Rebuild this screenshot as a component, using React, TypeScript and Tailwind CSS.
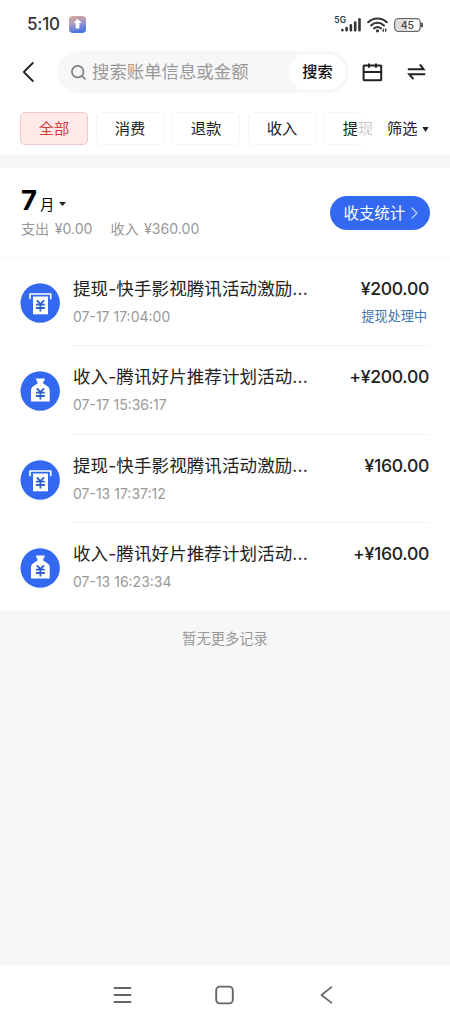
import { clsx } from 'clsx'

type RecordKind = 'withdraw' | 'income'

type BillRecord = {
  id: number
  kind: RecordKind
  title: string
  time: string
  amount: string
  status?: string
}

const tabs = ['全部', '消费', '退款', '收入']

const records: BillRecord[] = [
  { id: 1, kind: 'withdraw', title: '提现-快手影视腾讯活动激励...', time: '07-17 17:04:00', amount: '¥200.00', status: '提现处理中' },
  { id: 2, kind: 'income', title: '收入-腾讯好片推荐计划活动...', time: '07-17 15:36:17', amount: '+¥200.00' },
  { id: 3, kind: 'withdraw', title: '提现-快手影视腾讯活动激励...', time: '07-13 17:37:12', amount: '¥160.00' },
  { id: 4, kind: 'income', title: '收入-腾讯好片推荐计划活动...', time: '07-13 16:23:34', amount: '+¥160.00' }
]

function StatusBar() {
  return (
    <div className="flex h-12 items-center pt-px pl-[27px] pr-[26px] text-[#333]">
      <span className="text-[17px] font-medium tracking-[-0.2px]">5:10</span>
      <svg className="ml-[9px]" width="17" height="17" viewBox="0 0 17 17">
        <defs>
          <linearGradient id="app" x1="0" y1="0" x2="0.3" y2="1">
            <stop offset="0" stopColor="#e0a58c" />
            <stop offset="0.5" stopColor="#a99bc4" />
            <stop offset="1" stopColor="#4a74e6" />
          </linearGradient>
        </defs>
        <rect width="17" height="17" rx="4" fill="url(#app)" />
        <path d="M8.5 2.8 12.6 7H10.4V12.5H6.6V7H4.4Z" fill="#fff" />
      </svg>
      <div className="ml-auto flex items-center">
        <span className="-mr-[5px] mb-2 text-[8.5px] leading-none font-semibold">5G</span>
        <svg width="20" height="14" viewBox="0 0 20 14" stroke="currentColor" strokeWidth="2.6" strokeLinecap="round">
          <path d="M1.4 12V12.3M5.6 10V12.3M9.9 7.3V12.3M14.2 4.5V12.3M18.5 1.4V12.3" />
        </svg>
        <svg className="ml-[6px]" width="21" height="16" viewBox="0 0 21 16" fill="none" stroke="currentColor" strokeLinecap="round">
          <path d="M1.2 5.2C6.5.2 14.5.2 19.8 5.2M4 8.4C7.8 5 13.2 5 17 8.4M7 11.4C9 9.7 12 9.7 14 11.4" strokeWidth="2" />
          <circle cx="10.5" cy="13.8" r="1.6" fill="currentColor" stroke="none" />
          <path d="M16.6 12V14.5L15.5 13.6M18.6 14.5V12L19.7 12.9" strokeWidth="1" />
        </svg>
        <svg className="ml-[6px]" width="30" height="14" viewBox="0 0 30 14">
          <rect x="0.7" y="0.7" width="25.6" height="12.6" rx="3.8" fill="#fff" stroke="#666" strokeWidth="1.3" />
          <path d="M4.5 2H13V12H4.5C3 12 2 11 2 9.5V4.5C2 3 3 2 4.5 2Z" fill="#ddd" />
          <path d="M28 5.5V8.5" stroke="#555" strokeWidth="2" strokeLinecap="round" />
          <text x="13.4" y="10.7" textAnchor="middle" fontSize="10.5" fontWeight="500" fill="#444">45</text>
        </svg>
      </div>
    </div>
  )
}

function SearchHeader() {
  return (
    <div className="flex h-12 items-center pl-[22px] pr-6">
      <button className="w-[35px]">
        <svg width="12" height="20" viewBox="0 0 12 20" fill="none" stroke="#222" strokeWidth="1.8" strokeLinecap="round" strokeLinejoin="round">
          <path d="M10.8 1 1.8 10 10.8 19" />
        </svg>
      </button>
      <div className="flex h-[42px] w-[292px] items-center rounded-full bg-[#f7f7f7] pl-[13px] pr-[3px]">
        <svg width="17" height="17" viewBox="0 0 17 17" fill="none" stroke="#777" strokeWidth="1.6" strokeLinecap="round">
          <circle cx="7.7" cy="7.7" r="5.8" />
          <path d="M12 12 15 15" />
        </svg>
        <span className="mt-px ml-[5px] text-[17.4px] whitespace-nowrap text-[#999]">搜索账单信息或金额</span>
        <button className="ml-auto h-9 w-[57px] rounded-full bg-white pt-px text-[15.2px] font-medium text-[#111]">搜索</button>
      </div>
      <svg className="ml-[13px]" width="21" height="19" viewBox="0 0 21 19" fill="none" stroke="#222" strokeWidth="2">
        <rect x="1.6" y="2.4" width="17.6" height="14.8" rx="0.6" />
        <path d="M1.6 9H19.2M7 0.6V4.8M14 0.6V4.8" />
      </svg>
      <svg className="ml-auto" width="19" height="17" viewBox="0 0 19 17" fill="none" stroke="#222" strokeWidth="2">
        <path d="M0.8 5.2H16.6L12.8 0.4M18.2 10.2H2.2L6.4 15.2" />
      </svg>
    </div>
  )
}

function FilterTabs() {
  return (
    <div className="flex h-[59px] items-center pt-[5px] pl-5">
      <div className="relative flex w-[352px] gap-2 overflow-hidden text-[15.3px] text-[#222]">
        {tabs.map((tab, i) => (
          <button
            key={tab}
            className={clsx(
              'h-[33px] w-[68px] shrink-0 rounded-[5px] border pt-[2px]',
              i === 0 ? 'border-[#efc9c9] bg-[#ffe9e9] text-[#d33f3c]' : 'border-[#f5f5f5] bg-white'
            )}
          >
            {tab}
          </button>
        ))}
        <button className="h-[33px] w-[68px] shrink-0 rounded-[5px] border border-[#f5f5f5] bg-white pt-[2px]">提现</button>
        {/* fade over the last tab */}
        <div className="absolute inset-y-0 right-0 w-[15px] bg-white/75" />
      </div>
      <button className="ml-[15px] flex items-center pt-[2px] text-[15.3px] text-[#222]">
        筛选
        <svg className="ml-[4px]" width="7" height="5" viewBox="0 0 7 5">
          <path d="M0.3 0H6.7L3.5 5Z" fill="#222" />
        </svg>
      </button>
    </div>
  )
}

function MonthSummary() {
  return (
    <div className="flex h-[90px] border-b border-[#f5f5f5] pl-[21px] pr-5">
      <div className="pt-[17px]">
        <div className="flex h-[30px] items-baseline text-black">
          <span className="text-[27.5px] leading-[30px] font-bold">7</span>
          <span className="ml-[3px] text-[14.3px]">月</span>
          <svg className="mt-2 ml-[5px] self-center" width="7" height="4" viewBox="0 0 7 4">
            <path d="M0 0H7L3.5 4Z" fill="#222" />
          </svg>
        </div>
        <div className="mt-[5px] flex gap-[18px] text-[14.1px] leading-[18px] [word-spacing:1.5px] whitespace-nowrap text-[#999]">
          <span>支出 ¥0.00</span>
          <span>收入 ¥360.00</span>
        </div>
      </div>
      <button className="mt-7 ml-auto flex h-[34px] w-[100px] items-center rounded-full bg-[#3269f0] pl-[13.5px] text-[15.4px] whitespace-nowrap text-white">
        <span className="pt-px">收支统计</span>
        <svg className="ml-[6px]" width="7" height="12" viewBox="0 0 7 12" fill="none" stroke="#c5d5ff" strokeWidth="1.2" strokeLinecap="round" strokeLinejoin="round">
          <path d="M1 1 6 6 1 11" />
        </svg>
      </button>
    </div>
  )
}

function RecordIcon({ kind }: { kind: RecordKind }) {
  return (
    <svg className="mt-[25px] shrink-0" width="40" height="40" viewBox="0 0 40 40">
      <circle cx="20.2" cy="20" r="19.7" fill="#3269f0" />
      {kind === 'withdraw' ? (
        <>
          <path d="M10 16.3V11H30.7V16.3" fill="none" stroke="#fff" strokeWidth="1.6" />
          <path d="M13 13.5H28V31.3H13Z" fill="#fff" />
        </>
      ) : (
        <path d="M16.6 7.5H24.2C24.8 7.5 25 8 24.7 8.5L23.2 11.2V12.6L27.4 15.2C28.8 16.1 29.7 17.6 29.7 19.3V30.5H11V19.3C11 17.6 11.9 16.1 13.3 15.2L17.5 12.6V11.2L16 8.5C15.8 8 16 7.5 16.6 7.5Z" fill="#fff" />
      )}
      <path d="M16.8 17.3 20.4 21.2 24 17.3M16 21.6H24.8M16 25H24.8M20.4 21.2V28.5" fill="none" stroke="#2f5fc8" strokeWidth="1.8" />
    </svg>
  )
}

function RecordRow({ record, last }: { record: BillRecord; last: boolean }) {
  return (
    <div className="flex h-[88.3px] pl-5">
      <RecordIcon kind={record.kind} />
      <div className={clsx('mr-[21px] ml-[13px] flex flex-1 justify-between border-b', last ? 'border-transparent' : 'border-[#f1f1f1]')}>
        <div className="pt-[18px] whitespace-nowrap">
          <div className="text-[17.5px] leading-[26px] tracking-[0.1px] text-[#222]">{record.title}</div>
          <div className="mt-[5px] text-[14px] leading-[20px] text-[#999]">{record.time}</div>
        </div>
        <div className="flex flex-col items-end pt-[18px] whitespace-nowrap">
          <div className="text-[17.6px] leading-[26px] font-medium tracking-[-0.3px] text-[#222]">{record.amount}</div>
          {record.status && <div className="mt-[4px] mr-[2px] text-[13.1px] leading-[20px] text-[#3f74b5]">{record.status}</div>}
        </div>
      </div>
    </div>
  )
}

function NavigationBar() {
  return (
    <div className="flex h-[59px] items-center bg-white pl-[113px] pr-[117px]">
      <div className="flex w-full items-center justify-between">
        <svg width="19" height="18" viewBox="0 0 19 18" stroke="#666" strokeWidth="1.8" strokeLinecap="round">
          <path d="M1.5 2H17.5M1.5 9H17.5M1.5 16H17.5" />
        </svg>
        <svg className="mr-[3px]" width="19" height="20" viewBox="0 0 19 20" fill="none" stroke="#666" strokeWidth="1.9">
          <rect x="1.2" y="1.6" width="16.6" height="16.8" rx="3.6" />
        </svg>
        <svg width="13" height="18" viewBox="0 0 13 18" fill="none" stroke="#666" strokeWidth="1.7" strokeLinecap="round" strokeLinejoin="round">
          <path d="M11.5 1.2 1.5 9 11.5 16.8" />
        </svg>
      </div>
    </div>
  )
}

export default function App() {
  return (
    <div className="flex h-[1024px] w-full flex-col overflow-hidden bg-[#f7f7f7] font-['Inter','Noto_Sans_CJK_SC',sans-serif]">
      <div className="bg-white">
        <StatusBar />
        <SearchHeader />
        <FilterTabs />
      </div>
      <div className="mt-[13px] bg-white">
        <MonthSummary />
        {records.map((record, i) => (
          <RecordRow key={record.id} record={record} last={i === records.length - 1} />
        ))}
      </div>
      <div className="flex-1 pt-[18px] text-center text-[14.3px] leading-[20px] text-[#999]">暂无更多记录</div>
      <NavigationBar />
    </div>
  )
}
